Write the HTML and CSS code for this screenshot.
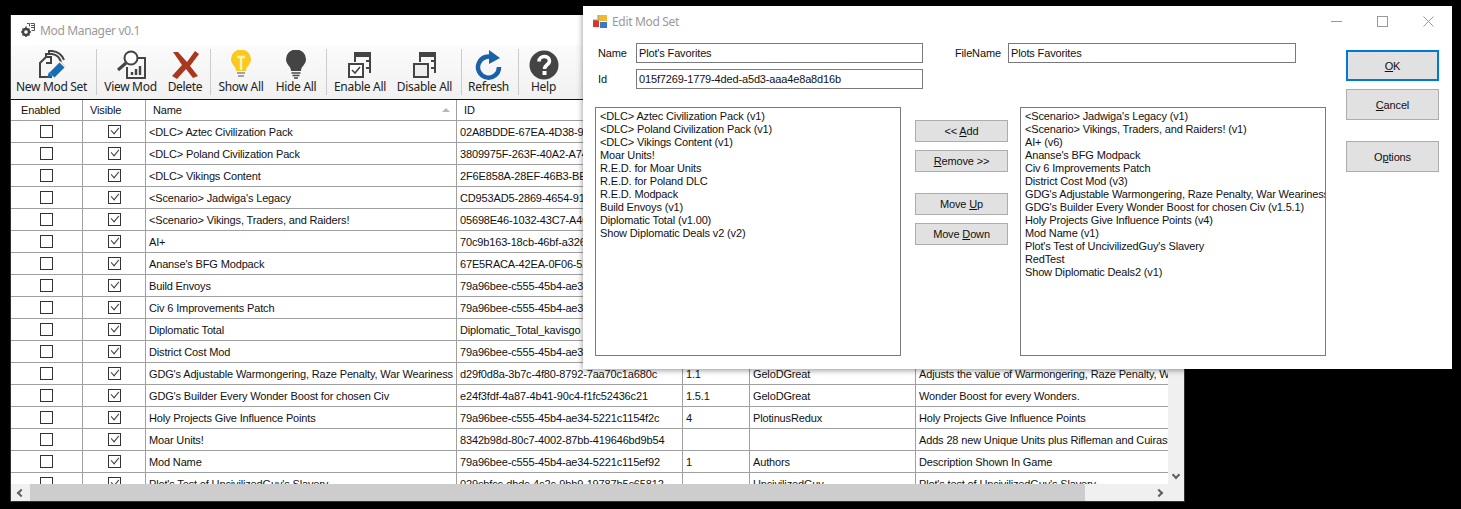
FILE: index.html
```html
<!DOCTYPE html>
<html lang="en">
<head>
    <meta charset="UTF-8">
    <title>Mod Manager</title>
    <link rel="stylesheet" href="styles.css">
</head>
<body>

<!-- main window -->
<div class="main-window">
    <div class="title-bar">
        <svg class="title-icon" width="14" height="14" viewBox="0 0 14 14">
            <circle cx="5" cy="9" r="3" fill="none" stroke="#444" stroke-width="2.400"/>
            <path d="M5 3.500v2M5 12.500v1.500M0 9h1.500M8.500 9H10M1.500 5.500l1 1M8.500 12.500l-1-1M1.500 12.500l1-1M8.500 5.500l-1 1" stroke="#444" stroke-width="1.500"/>
            <path d="M6 .5h2.500v3M9.500 .5h4v7h-3" fill="none" stroke="#555"/>
            <path d="M10 2.500h3M10 4.500h3" stroke="#555"/>
        </svg>
        <span>Mod Manager v0.1</span>
    </div>

    <div class="toolbar">
        <div class="tool tool-new">
            <svg width="30" height="30" viewBox="0 0 30 30">
                <path d="M15 27H3V13l6-6h5v6H9" fill="none" stroke="#444" stroke-width="2"/>
                <path d="M9 7V4h6q7 1 9 8M12 3V1h3q9 1 12 9" fill="none" stroke="#444" stroke-width="2"/>
                <path d="M15 25L26 14" stroke="#1a6cb0" stroke-width="7"/>
                <path d="M22.500 11.500l6 6" stroke="#fff" stroke-width="1.200"/>
                <path d="M10 28l2-6 4 4z" fill="#1a6cb0"/>
            </svg>
            <span>New Mod Set</span>
        </div>
        <i class="sep"></i>
        <div class="tool tool-view">
            <svg width="30" height="30" viewBox="0 0 30 30">
                <circle cx="15" cy="8" r="6.500" fill="#fff" stroke="#444" stroke-width="2"/>
                <path d="M10 13L2 20" stroke="#444" stroke-width="3"/>
                <path d="M21 8h8v20H11V17" fill="none" stroke="#444" stroke-width="2"/>
                <path d="M16 25v-3M20 25v-6M24 25v-9" stroke="#444" stroke-width="2.400"/>
            </svg>
            <span>View Mod</span>
        </div>
        <div class="tool tool-delete">
            <svg width="30" height="30" viewBox="0 0 30 30">
                <path d="M3 2l5 0L17 12 25 1l4 3-9 12 8 10-5 2-7-9-9 10-5-3 10-11z" fill="#a8381e"/>
            </svg>
            <span>Delete</span>
        </div>
        <i class="sep"></i>
        <div class="tool tool-show">
            <svg width="30" height="30" viewBox="0 0 30 30">
                <path d="M10 21c0-5-5-6-5-12a10 9.500 0 0 1 20 0c0 6-5 7-5 12z" fill="#fbc81e"/>
                <path d="M11 7h8M15 7v13" stroke="#fff3b8" stroke-width="2.400" fill="none"/>
                <path d="M11 23h8M12 26h6" stroke="#888" stroke-width="1.600"/>
            </svg>
            <span>Show All</span>
        </div>
        <div class="tool tool-hide">
            <svg width="30" height="30" viewBox="0 0 30 30">
                <path d="M10 21c0-5-5-6-5-12a10 9.500 0 0 1 20 0c0 6-5 7-5 12z" fill="#444"/>
                <path d="M10.500 23h9M11.500 25.500h7M13 28h4" stroke="#444" stroke-width="1.600"/>
            </svg>
            <span>Hide All</span>
        </div>
        <i class="sep"></i>
        <div class="tool tool-enable">
            <svg width="30" height="30" viewBox="0 0 30 30">
                <path d="M10 12V3h15v20" fill="none" stroke="#444" stroke-width="2"/>
                <path d="M10 3h15v4H10z" fill="#444"/>
                <path d="M21 11h4M21 18h4" stroke="#444" stroke-width="2"/>
                <rect x="4" y="14" width="14" height="13" fill="#fff" stroke="#444" stroke-width="2"/>
                <path d="M7 20l3 3 5-6" fill="none" stroke="#444" stroke-width="1.600"/>
            </svg>
            <span>Enable All</span>
        </div>
        <div class="tool tool-disable">
            <svg width="30" height="30" viewBox="0 0 30 30">
                <path d="M10 12V3h15v20" fill="none" stroke="#444" stroke-width="2"/>
                <path d="M10 3h15v4H10z" fill="#444"/>
                <path d="M21 11h4M21 18h4" stroke="#444" stroke-width="2"/>
                <rect x="4" y="14" width="14" height="13" fill="#eee" stroke="#444" stroke-width="2"/>
            </svg>
            <span>Disable All</span>
        </div>
        <i class="sep"></i>
        <div class="tool tool-refresh">
            <svg width="30" height="30" viewBox="0 0 30 30">
                <path d="M20.500 8.500A10.500 10.500 0 1 0 25 17" fill="none" stroke="#1a62a8" stroke-width="4.500"/>
                <path d="M15 0l11 8-11 6z" fill="#1a62a8"/>
            </svg>
            <span>Refresh</span>
        </div>
        <i class="sep"></i>
        <div class="tool tool-help">
            <svg width="30" height="30" viewBox="0 0 30 30">
                <circle cx="15" cy="15" r="14.500" fill="#444"/>
                <path d="M10 11.500c0-6.500 10.500-6.500 10.500-.5 0 4-5 3.500-5 8" fill="none" stroke="#fff" stroke-width="3.600"/>
                <rect x="13.500" y="21" width="4" height="4" fill="#fff"/>
            </svg>
            <span>Help</span>
        </div>
    </div>

    <div class="grid-view">
        <div class="grid-clip">
            <table class="mods">
                <colgroup>
                    <col class="col-enabled"><col class="col-visible"><col class="col-name"><col class="col-id"><col class="col-version"><col class="col-author"><col class="col-desc">
                </colgroup>
                <thead>
                    <tr><th>Enabled</th><th>Visible</th><th class="sorted">Name</th><th>ID</th><th>Version</th><th>Author</th><th>Description</th></tr>
                </thead>
                <tbody>
                    <tr><td class="c"><b class="check"></b></td><td class="c"><b class="check on"></b></td><td>&lt;DLC&gt; Aztec Civilization Pack</td><td>02A8BDDE-67EA-4D38-9A59-8A7C1B3D5E21</td><td></td><td></td><td></td></tr>
                    <tr><td class="c"><b class="check"></b></td><td class="c"><b class="check on"></b></td><td>&lt;DLC&gt; Poland Civilization Pack</td><td>3809975F-263F-40A2-A747-2C1D5A8E90B3</td><td></td><td></td><td></td></tr>
                    <tr><td class="c"><b class="check"></b></td><td class="c"><b class="check on"></b></td><td>&lt;DLC&gt; Vikings Content</td><td>2F6E858A-28EF-46B3-BEA0-1D7C3E5F9A42</td><td></td><td></td><td></td></tr>
                    <tr><td class="c"><b class="check"></b></td><td class="c"><b class="check on"></b></td><td>&lt;Scenario&gt; Jadwiga's Legacy</td><td>CD953AD5-2869-4654-9132-6B8E0F4A7C15</td><td></td><td></td><td></td></tr>
                    <tr><td class="c"><b class="check"></b></td><td class="c"><b class="check on"></b></td><td>&lt;Scenario&gt; Vikings, Traders, and Raiders!</td><td>05698E46-1032-43C7-A40D-9F2B6C8D1E37</td><td></td><td></td><td></td></tr>
                    <tr><td class="c"><b class="check"></b></td><td class="c"><b class="check on"></b></td><td>AI+</td><td>70c9b163-18cb-46bf-a326-4e7d1a9c5b08</td><td></td><td></td><td></td></tr>
                    <tr><td class="c"><b class="check"></b></td><td class="c"><b class="check on"></b></td><td>Ananse's BFG Modpack</td><td>67E5RACA-42EA-0F06-5221-3A8D7C6B2F19</td><td></td><td></td><td></td></tr>
                    <tr><td class="c"><b class="check"></b></td><td class="c"><b class="check on"></b></td><td>Build Envoys</td><td>79a96bee-c555-45b4-ae34-5221c1151a01</td><td></td><td></td><td></td></tr>
                    <tr><td class="c"><b class="check"></b></td><td class="c"><b class="check on"></b></td><td>Civ 6 Improvements Patch</td><td>79a96bee-c555-45b4-ae34-5221c1152b02</td><td></td><td></td><td></td></tr>
                    <tr><td class="c"><b class="check"></b></td><td class="c"><b class="check on"></b></td><td>Diplomatic Total</td><td>Diplomatic_Total_kavisgo</td><td></td><td></td><td></td></tr>
                    <tr><td class="c"><b class="check"></b></td><td class="c"><b class="check on"></b></td><td>District Cost Mod</td><td>79a96bee-c555-45b4-ae34-5221c1153c03</td><td></td><td></td><td></td></tr>
                    <tr><td class="c"><b class="check"></b></td><td class="c"><b class="check on"></b></td><td>GDG's Adjustable Warmongering, Raze Penalty, War Weariness</td><td>d29f0d8a-3b7c-4f80-8792-7aa70c1a680c</td><td>1.1</td><td>GeloDGreat</td><td>Adjusts the value of Warmongering, Raze Penalty, War Weariness</td></tr>
                    <tr><td class="c"><b class="check"></b></td><td class="c"><b class="check on"></b></td><td>GDG's Builder Every Wonder Boost for chosen Civ</td><td>e24f3fdf-4a87-4b41-90c4-f1fc52436c21</td><td>1.5.1</td><td>GeloDGreat</td><td>Wonder Boost for every Wonders.</td></tr>
                    <tr><td class="c"><b class="check"></b></td><td class="c"><b class="check on"></b></td><td>Holy Projects Give Influence Points</td><td>79a96bee-c555-45b4-ae34-5221c1154f2c</td><td>4</td><td>PlotinusRedux</td><td>Holy Projects Give Influence Points</td></tr>
                    <tr><td class="c"><b class="check"></b></td><td class="c"><b class="check on"></b></td><td>Moar Units!</td><td>8342b98d-80c7-4002-87bb-419646bd9b54</td><td></td><td></td><td>Adds 28 new Unique Units plus Rifleman and Cuirassier</td></tr>
                    <tr><td class="c"><b class="check"></b></td><td class="c"><b class="check on"></b></td><td>Mod Name</td><td>79a96bee-c555-45b4-ae34-5221c115ef92</td><td>1</td><td>Authors</td><td>Description Shown In Game</td></tr>
                    <tr><td class="c"><b class="check"></b></td><td class="c"><b class="check on"></b></td><td>Plot's Test of UncivilizedGuy's Slavery</td><td>029cbfcc-dbdc-4c2c-9bb9-19787b5c65812</td><td></td><td>UncivilizedGuy</td><td>Plot's test of UncivilizedGuy's Slavery</td></tr>
                </tbody>
            </table>
        </div>
        <div class="vscroll"><span class="arrow-down"></span></div>
        <div class="hscroll">
            <span class="arrow-left"></span>
            <div class="thumb"></div>
            <span class="arrow-right"></span>
        </div>
        <div class="corner"></div>
    </div>
</div>

<!-- dialog -->
<div class="dialog">
    <div class="dialog-title">
        <svg width="14" height="13" viewBox="0 0 14 13">
            <rect x="0" y="5" width="6" height="7" fill="#d8382c"/>
            <rect x="5" y="0" width="9" height="6" fill="#f2b632"/>
            <rect x="7" y="7" width="7" height="6" fill="#3a78c8"/>
            <path d="M0 5h5V0" fill="none" stroke="#999"/>
        </svg>
        <span class="dialog-name">Edit Mod Set</span>
        <div class="win-buttons">
            <svg width="11" height="11" viewBox="0 0 11 11"><path d="M0 5.500h11" stroke="#999"/></svg>
            <svg width="11" height="11" viewBox="0 0 11 11"><rect x=".5" y=".5" width="10" height="10" fill="none" stroke="#999"/></svg>
            <svg width="11" height="11" viewBox="0 0 11 11"><path d="M.5 .5l10 10M10.500 .5l-10 10" stroke="#999"/></svg>
        </div>
    </div>
    <div class="dialog-body">
        <div class="dialog-main">
            <div class="fields">
                <label class="lbl-name" for="name">Name</label>
                <input id="name" type="text" value="Plot's Favorites">
                <label class="lbl-file" for="file">FileName</label>
                <input id="file" type="text" value="Plots Favorites">
                <label class="lbl-name" for="modid">Id</label>
                <input id="modid" type="text" value="015f7269-1779-4ded-a5d3-aaa4e8a8d16b">
            </div>
            <div class="lists">
                <ul class="list">
                    <li>&lt;DLC&gt; Aztec Civilization Pack (v1)</li>
                    <li>&lt;DLC&gt; Poland Civilization Pack (v1)</li>
                    <li>&lt;DLC&gt; Vikings Content (v1)</li>
                    <li>Moar Units!</li>
                    <li>R.E.D. for Moar Units</li>
                    <li>R.E.D. for Poland DLC</li>
                    <li>R.E.D. Modpack</li>
                    <li>Build Envoys (v1)</li>
                    <li>Diplomatic Total (v1.00)</li>
                    <li>Show Diplomatic Deals v2 (v2)</li>
                </ul>
                <div class="move-buttons">
                    <button type="button">&lt;&lt; <u>A</u>dd</button>
                    <button type="button"><u>R</u>emove &gt;&gt;</button>
                    <button type="button" class="move-up">Move <u>U</u>p</button>
                    <button type="button">Move <u>D</u>own</button>
                </div>
                <ul class="list">
                    <li>&lt;Scenario&gt; Jadwiga's Legacy (v1)</li>
                    <li>&lt;Scenario&gt; Vikings, Traders, and Raiders! (v1)</li>
                    <li>AI+ (v6)</li>
                    <li>Ananse's BFG Modpack</li>
                    <li>Civ 6 Improvements Patch</li>
                    <li>District Cost Mod (v3)</li>
                    <li>GDG's Adjustable Warmongering, Raze Penalty, War Weariness</li>
                    <li>GDG's Builder Every Wonder Boost for chosen Civ (v1.5.1)</li>
                    <li>Holy Projects Give Influence Points (v4)</li>
                    <li>Mod Name (v1)</li>
                    <li>Plot's Test of UncivilizedGuy's Slavery</li>
                    <li>RedTest</li>
                    <li>Show Diplomatic Deals2 (v1)</li>
                </ul>
            </div>
        </div>
        <div class="dialog-actions">
            <button type="button" class="btn-ok"><u>O</u>K</button>
            <button type="button" class="btn-side"><u>C</u>ancel</button>
            <button type="button" class="btn-side btn-options">O<u>p</u>tions</button>
        </div>
    </div>
</div>

</body>
</html>
```

FILE: styles.css
```css
* {
    margin: 0;
    padding: 0;
    box-sizing: border-box;
}

body {
    width: 1461px;
    height: 509px;
    overflow: hidden;
    background-color: #000;
    font: 11px "Liberation Sans", Arial, sans-serif;
    letter-spacing: -0.15px;
    color: #111;
}

/* main window */

.main-window {
    position: absolute;
    left: 10px;
    top: 15px;
    width: 1175px;
    height: 487px;
    display: flex;
    flex-direction: column;
    background-color: #f0f0f0;
    border: 1px solid #333;
    border-top: 0;
}

.title-bar {
    height: 30px;
    display: flex;
    align-items: center;
    padding-left: 10px;
    background-color: #fff;
    color: #999;
    font: 12px "Noto Sans", sans-serif;
    letter-spacing: -0.35px;
}

.title-icon {
    margin-right: 5px;
}

.toolbar {
    height: 55px;
    display: flex;
    align-items: flex-start;
    border-bottom: 1px solid #111;
    background: linear-gradient(#fbfbfb, #f1f1f1);
    font: 12px "Noto Sans", sans-serif;
    letter-spacing: -0.3px;
}

.tool {
    display: flex;
    flex-direction: column;
    align-items: center;
    padding-top: 5px;
    white-space: nowrap;
    color: #222;
}

.tool span {
    margin-top: -1px;
    line-height: 16px;
}

.tool-new { width: 81px; margin-right: 4px; }
.tool-view { width: 67px; }
.tool-delete { width: 42px; margin-right: 4px; }
.tool-show { width: 60px; }
.tool-hide { width: 50px; margin-right: 5px; }
.tool-enable { width: 66px; }
.tool-disable { width: 63px; margin-right: 5px; }
.tool-refresh { width: 53px; margin-right: 3px; }
.tool-help { width: 49px; }

.sep {
    width: 1px;
    height: 46px;
    margin-top: 4px;
    background-color: #ccc;
}

.grid-view {
    flex: 1;
    min-height: 0;
    display: grid;
    grid-template-columns: 1157px 1fr;
    grid-template-rows: 1fr 17px;
}

.grid-clip {
    overflow: hidden;
    background-color: #fff;
}

.mods {
    table-layout: fixed;
    width: 1400px;
    border-collapse: separate;
    border-spacing: 0;
}

.col-enabled { width: 72px; }
.col-visible { width: 63px; }
.col-name { width: 311px; }
.col-id { width: 226px; }
.col-version { width: 67px; }
.col-author { width: 166px; }
.col-desc { width: 495px; }

.mods th {
    height: 21px;
    padding-left: 7px;
    font-weight: normal;
    text-align: left;
    white-space: nowrap;
    overflow: hidden;
    border-right: 1px solid #a0a0a0;
    border-bottom: 1px solid #a0a0a0;
}

.mods th:first-child {
    padding-left: 10px;
}

.mods th.sorted {
    position: relative;
}

.mods th.sorted::after {
    content: "";
    position: absolute;
    right: 6px;
    top: 8px;
    border-left: 4px solid transparent;
    border-right: 4px solid transparent;
    border-bottom: 4px solid #b8b8b8;
}

.mods td {
    height: 22px;
    padding-left: 3px;
    white-space: nowrap;
    overflow: hidden;
    border-right: 1px solid #a0a0a0;
    border-bottom: 1px solid #a0a0a0;
}

.mods td.c {
    padding: 0;
    text-align: center;
}

.check {
    position: relative;
    display: inline-block;
    width: 13px;
    height: 13px;
    vertical-align: middle;
    background-color: #fff;
    border: 1px solid #333;
}

.check.on::after {
    content: "";
    position: absolute;
    left: 2px;
    top: 1px;
    width: 7px;
    height: 4px;
    border-left: 1px solid #333;
    border-bottom: 1px solid #333;
    transform: rotate(-50deg) skewX(-8deg);
}

.vscroll {
    display: flex;
    align-items: flex-end;
    justify-content: center;
    padding-bottom: 6px;
    background-color: #f0f0f0;
}

.hscroll {
    display: flex;
    align-items: center;
    background-color: #f0f0f0;
}

.thumb {
    flex: none;
    width: 1055px;
    height: 100%;
    background-color: #cdcdcd;
}

.arrow-left,
.arrow-right,
.arrow-down {
    display: block;
    flex: none;
    width: 6px;
    height: 6px;
    border-left: 2px solid #606060;
    border-bottom: 2px solid #606060;
}

.arrow-left {
    margin: 0 6px 0 7px;
    transform: rotate(45deg);
}

.arrow-right {
    margin-left: 71px;
    transform: rotate(225deg);
}

.arrow-down {
    transform: rotate(-45deg);
}

.corner {
    background-color: #f0f0f0;
}

/* dialog */

.dialog {
    position: absolute;
    left: 583px;
    top: 6px;
    width: 869px;
    height: 363px;
    background-color: #fff;
    box-shadow: 0 1px 6px rgba(0,0,0,0.45);
}

.dialog-title {
    height: 30px;
    display: flex;
    align-items: center;
    padding-left: 10px;
    color: #999;
    font: 12px "Noto Sans", sans-serif;
    letter-spacing: -0.33px;
}

.dialog-name {
    margin-left: 5px;
}

.win-buttons {
    margin-left: auto;
    display: flex;
    gap: 35px;
    padding-right: 18px;
}

.dialog-body {
    display: flex;
    gap: 20px;
    padding: 7px 0 0 12px;
}

.dialog-main {
    width: 731px;
}

.fields {
    display: grid;
    grid-template-columns: 41px 287px 85px 288px;
    grid-auto-rows: 20px;
    row-gap: 6px;
    align-items: center;
}

.fields input {
    width: 100%;
    height: 20px;
    padding: 0 2px;
    border: 1px solid #7a7a7a;
    font: 11px "Liberation Sans", Arial, sans-serif;
    letter-spacing: -0.15px;
    color: #111;
}

.lbl-name {
    padding-left: 3px;
}

.lbl-file {
    padding-left: 32px;
}

.lists {
    display: flex;
    margin-top: 18px;
}

.list {
    width: 306px;
    height: 249px;
    padding: 2px 4px;
    overflow: hidden;
    list-style: none;
    border: 1px solid #7a7a7a;
    line-height: 13px;
    white-space: nowrap;
}

.move-buttons {
    width: 93px;
    margin: 0 12px 0 14px;
    padding-top: 13px;
    display: flex;
    flex-direction: column;
    gap: 8px;
}

button {
    display: block;
    background-color: #e1e1e1;
    border: 1px solid #adadad;
    font: 11px "Liberation Sans", Arial, sans-serif;
    letter-spacing: -0.15px;
    color: #111;
}

.move-buttons button {
    height: 22px;
}

.move-buttons .move-up {
    margin-top: 13px;
}

.dialog-actions {
    width: 93px;
    padding-top: 7px;
    display: flex;
    flex-direction: column;
    gap: 8px;
}

.dialog-actions button {
    height: 31px;
}

.btn-ok {
    border: 2px solid #0078d7;
}

.btn-options {
    margin-top: 13px;
}
```
